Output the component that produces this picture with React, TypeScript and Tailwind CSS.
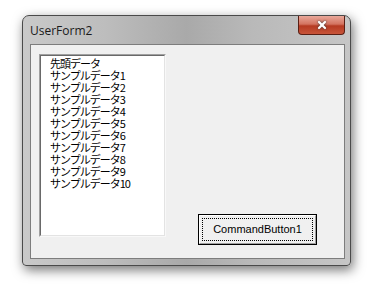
import { X } from 'lucide-react';

const items = [
  '先頭データ',
  'サンプルデータ1',
  'サンプルデータ2',
  'サンプルデータ3',
  'サンプルデータ4',
  'サンプルデータ5',
  'サンプルデータ6',
  'サンプルデータ7',
  'サンプルデータ8',
  'サンプルデータ9',
  'サンプルデータ10',
];

export default function App() {
  return (
    <div className="w-[373px] h-[290px] bg-white pt-[15px] pl-[22px] overflow-hidden">
      {/* window frame */}
      <div className="w-[329px] h-[251px] rounded-t-[7px] rounded-b-[4px] border border-[#4a4a4a] bg-[linear-gradient(90deg,#c9c9c9_0%,#bdbdbd_25%,#a9a9a9_50%,#b9b9b9_70%,#c6c6c6_100%)] shadow-[2px_4px_12px_rgba(0,0,0,0.55)] flex flex-col">
        {/* title bar */}
        <div className="h-[28px] flex items-start justify-between pl-[7px] pr-[5px]">
          <span className="mt-[6px] text-[12px] text-[#1a1a1a] font-['Open_Sans',sans-serif]">UserForm2</span>
          <div className="w-[47px] h-[19px] rounded-b-[4px] border border-[#5a1f14] border-t-0 bg-[linear-gradient(180deg,#e9a89a_0%,#d37360_45%,#b53a22_55%,#c8553a_100%)] flex items-center justify-center">
            <X className="w-[12px] h-[12px] text-white drop-shadow-[0_0_1px_#333]" strokeWidth={4.5} />
          </div>
        </div>
        {/* client area */}
        <div className="ml-[7px] mr-[5px] h-[215px] border border-[#7d7d7d] bg-[#f0f0f0] flex items-start">
          {/* list box */}
          <div className="ml-[8px] mt-[9px] w-[127px] h-[183px] border-t border-l border-[#a0a0a0] border-r-[#f8f8f8] border-b-[#f8f8f8] border-r border-b">
            <div className="w-full h-full border-t border-l border-[#696969] border-r border-b border-r-[#e3e3e3] border-b-[#e3e3e3] bg-white pl-[9px] pt-[1px]">
              {items.map((t) => (
                <div key={t} className="h-[12px] leading-[12px] text-[11px] tracking-[-1px] text-black font-['Noto_Sans_CJK_JP',sans-serif] whitespace-nowrap">
                  {t}
                </div>
              ))}
            </div>
          </div>
          {/* command button */}
          <div className="ml-[32px] mt-[169px] w-[119px] h-[31px] border border-black bg-[#f0f0f0]">
            <div className="w-full h-full border-t border-l border-white border-r border-b border-r-[#a0a0a0] border-b-[#a0a0a0] p-[2px]">
              <div className="w-full h-full border border-dotted border-black flex items-center justify-center text-[11px] text-black font-['Liberation_Sans',sans-serif]">
                CommandButton1
              </div>
            </div>
          </div>
        </div>
      </div>
    </div>
  );
}
